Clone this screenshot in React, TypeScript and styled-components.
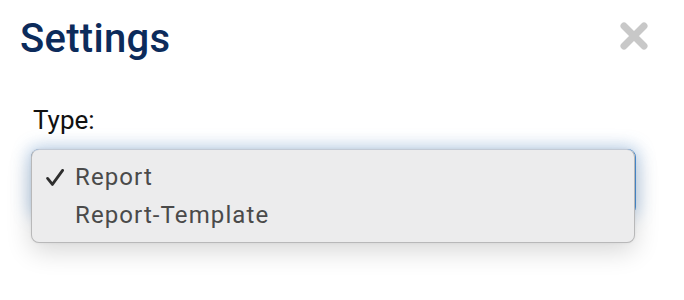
import React from 'react';
import styled, { createGlobalStyle } from 'styled-components';

const GlobalStyle = createGlobalStyle`
  html, body {
    margin: 0;
    padding: 0;
    background: #ffffff;
  }
  body {
    font-family: Roboto, 'Liberation Sans', sans-serif;
  }
`;

const Dialog = styled.div`
  width: 684px;
  height: 300px;
  box-sizing: border-box;
  padding-top: 15px;
  background: #ffffff;
  overflow: hidden;
`;

const Header = styled.div`
  display: flex;
  justify-content: space-between;
  align-items: flex-start;
  padding: 0 36px 0 20px;
`;

const Title = styled.h1`
  margin: 0;
  font-size: 40px;
  line-height: 48px;
  font-weight: 500;
  color: #0c2b5b;
  letter-spacing: 0.3px;
`;

const CloseButton = styled.button`
  margin-top: 7px;
  padding: 0;
  border: 0;
  background: none;
  width: 28px;
  height: 28px;
  cursor: pointer;
  display: flex;
`;

const Form = styled.div`
  display: flex;
  flex-direction: column;
  padding: 42px 48px 0 31px;
`;

const Label = styled.label`
  margin: 0 0 14px 2px;
  font-size: 26px;
  line-height: 30px;
  color: #111111;
`;

const SelectField = styled.div`
  position: relative;
  height: 64px;
  border: 1px solid #4a8fd6;
  border-radius: 8px;
  background: #ffffff;
  box-shadow: 0 0 16px 3px rgba(90, 150, 215, 0.35);
`;

const ListBox = styled.ul`
  position: absolute;
  top: -1px;
  left: -1px;
  right: 0;
  margin: 0;
  padding: 8px 0;
  list-style: none;
  border: 1px solid rgba(0, 0, 0, 0.22);
  border-top-color: rgba(120, 140, 170, 0.35);
  border-radius: 8px;
  background: #ececed;
  box-shadow: 0 8px 26px rgba(0, 0, 0, 0.16), 0 0 3px rgba(0, 0, 0, 0.06);
`;

const Option = styled.li`
  display: flex;
  align-items: center;
  height: 38px;
  padding-left: 14px;
  font-size: 24px;
  letter-spacing: 1.1px;
  color: #4a4a4a;
`;

const CheckSlot = styled.span`
  width: 29px;
  height: 17px;
  flex: none;
  display: flex;
  margin-top: 1px;
`;

const CheckIcon = () => (
  <svg width="18" height="17" viewBox="0 0 18 17">
    <path
      d="M1.6 9.4 L6.4 15.4 L16.6 1.4"
      stroke="#2e2e2e"
      strokeWidth="2.8"
      strokeLinecap="round"
      strokeLinejoin="round"
      fill="none"
    />
  </svg>
);

const CloseIcon = () => (
  <svg width="28" height="28" viewBox="0 0 28 28">
    <path
      d="M4 4 L24 24 M24 4 L4 24"
      stroke="#c8c8c8"
      strokeWidth="7"
      strokeLinecap="round"
      fill="none"
    />
  </svg>
);

const options = [
  { label: 'Report', selected: true },
  { label: 'Report-Template', selected: false },
];

export default function App() {
  return (
    <>
      <GlobalStyle />
      <Dialog>
        <Header>
          <Title>Settings</Title>
          <CloseButton aria-label="Close">
            <CloseIcon />
          </CloseButton>
        </Header>
        <Form>
          <Label>Type:</Label>
          <SelectField>
            <ListBox>
              {options.map((o) => (
                <Option key={o.label}>
                  <CheckSlot>{o.selected && <CheckIcon />}</CheckSlot>
                  {o.label}
                </Option>
              ))}
            </ListBox>
          </SelectField>
        </Form>
      </Dialog>
    </>
  );
}
